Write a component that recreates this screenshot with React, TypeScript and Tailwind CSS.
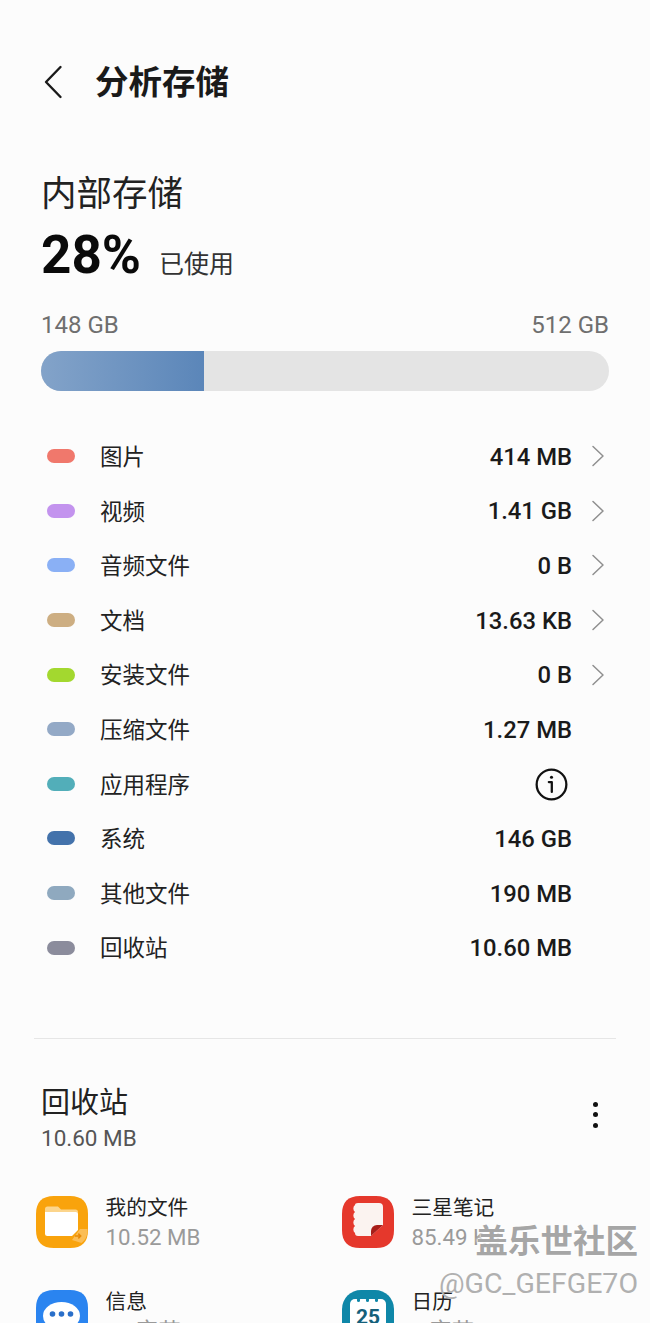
const FONT = "font-['Roboto','Noto_Sans_CJK_SC',sans-serif]";

const SQUIRCLE = 'M18 0H34C46 0 52 6 52 18V34C52 46 46 52 34 52H18C6 52 0 46 0 34V18C0 6 6 0 18 0z';

const rows = [
  { label: '图片', value: '414 MB', dot: 'bg-[#f0786c]', arrow: true },
  { label: '视频', value: '1.41 GB', dot: 'bg-[#c393ee]', arrow: true },
  { label: '音频文件', value: '0 B', dot: 'bg-[#8ab0f5]', arrow: true },
  { label: '文档', value: '13.63 KB', dot: 'bg-[#cdae82]', arrow: true },
  { label: '安装文件', value: '0 B', dot: 'bg-[#a3d82f]', arrow: true },
  { label: '压缩文件', value: '1.27 MB', dot: 'bg-[#93a9c6]' },
  { label: '应用程序', info: true, dot: 'bg-[#52aeb9]' },
  { label: '系统', value: '146 GB', dot: 'bg-[#4372ab]' },
  { label: '其他文件', value: '190 MB', dot: 'bg-[#8fa9bf]' },
  { label: '回收站', value: '10.60 MB', dot: 'bg-[#8b8c9c]' },
];

function BackIcon() {
  return (
    <svg width="20" height="34" viewBox="0 0 20 34" fill="none" stroke="#1a1a1a" strokeWidth="2.4">
      <path d="M17.500 2L3 17l14.500 15" strokeLinecap="round" strokeLinejoin="round" />
    </svg>
  );
}

function RowChevron() {
  return (
    <svg width="14" height="22" viewBox="0 0 14 22" fill="none" stroke="#8f8f8f" strokeWidth="1.5">
      <path d="M2 1.500L12 11 2 20.500" strokeLinecap="round" strokeLinejoin="round" />
    </svg>
  );
}

function InfoIcon() {
  return (
    <svg width="33" height="33" viewBox="0 0 32 32" fill="none" stroke="#111" strokeWidth="2.2">
      <circle cx="16" cy="16" r="14.400" />
      <path d="M13.400 13.600h2.900v9.600" strokeLinecap="round" strokeLinejoin="round" />
      <circle cx="16" cy="9" r="1.500" fill="#111" stroke="none" />
    </svg>
  );
}

function FilesIcon() {
  return (
    <svg width="52" height="52" viewBox="0 0 52 52">
      <path d={SQUIRCLE} fill="#f9a30c" />
      <path d="M9 13a2.500 2.500 0 0 1 2.500-2.500H22l3 3h14.500A2.500 2.500 0 0 1 42 16v3H9z" fill="#fcd58c" />
      <path d="M9 16h30.500a2.500 2.500 0 0 1 2.500 2.500V34l-6 6H11.500A2.500 2.500 0 0 1 9 37.500z" fill="#fff" />
      <path d="M36 44l8-11h7.500c0 7-2 11-6 14z" fill="#fbbd55" />
      <path d="M39 40h5.500m-2.200-2.400l2.400 2.400-2.400 2.400" stroke="#e88a06" strokeWidth="1.500" fill="none" />
    </svg>
  );
}

function NotesIcon() {
  return (
    <svg width="52" height="52" viewBox="0 0 52 52">
      <path d={SQUIRCLE} fill="#e5382c" />
      <path
        d="M16 7h21a4 4 0 0 1 4 4v18L29 40H16a3 3 0 0 1-3-3a4.500 4.500 0 0 1 0-7a4.500 4.500 0 0 1 0-7a4.500 4.500 0 0 1 0-7a4.500 4.500 0 0 1 0-7a3 2 0 0 1 3-2z"
        fill="#fbf3f0"
      />
      <path d="M29 40v-5a6 6 0 0 1 6-6h6z" fill="#a81d18" />
    </svg>
  );
}

function MessagesIcon() {
  return (
    <svg width="52" height="52" viewBox="0 0 52 52">
      <path d={SQUIRCLE} fill="#2a84f0" />
      <ellipse cx="25.500" cy="26" rx="18.500" ry="14" fill="#fff" />
      <path d="M13 33l-2 10 9-5z" fill="#fff" />
      <circle cx="16.500" cy="24" r="2.800" fill="#2a6fc9" />
      <circle cx="25.500" cy="24" r="2.800" fill="#2a6fc9" />
      <circle cx="34.500" cy="24" r="2.800" fill="#2a6fc9" />
    </svg>
  );
}

function CalendarIcon() {
  return (
    <div className="relative h-[52px] w-[52px] overflow-hidden rounded-[19px] bg-[#0f87a8]">
      <div className="mx-auto mt-[9px] flex h-[38px] w-[36px] justify-center rounded-[5px] bg-white pt-[7px] text-[21px] leading-[22px] font-bold text-[#15607a]">
        25
      </div>
      <span className="absolute top-[8px] left-[15px] h-[4px] w-[3px] rounded-full bg-[#0f87a8]" />
      <span className="absolute top-[8px] left-[24px] h-[4px] w-[3px] rounded-full bg-[#0f87a8]" />
      <span className="absolute top-[8px] left-[33px] h-[4px] w-[3px] rounded-full bg-[#0f87a8]" />
    </div>
  );
}

function AppItem({ icon, name, size }: { icon: React.ReactNode; name: string; size: string }) {
  return (
    <div className="flex h-[94px] items-start">
      {icon}
      <div className="-mt-[3px] ml-[17.500px]">
        <div className="text-[20.700px] leading-[30px] text-[#222]">{name}</div>
        <div className="text-[22.300px] leading-[29px] text-[#9a9a9a]">{size}</div>
      </div>
    </div>
  );
}

export default function App() {
  return (
    <div className={`${FONT} relative h-[1323px] w-[650px] overflow-hidden bg-[#fcfcfc] text-[#0a0a0a]`}>
      <div className="flex h-[164px] items-center pl-[43px]">
        <BackIcon />
        <span className="mt-[1px] ml-[32px] text-[33.500px] leading-none font-bold text-[#1a1a1a]">分析存储</span>
      </div>

      <section className="px-[41px]">
        <h2 className="mt-[10px] text-[35.500px] leading-[40px] text-[#222]">内部存储</h2>
        <div className="mt-[11px] flex items-end">
          <span className="text-[53px] leading-[60px] font-bold">28%</span>
          <span className="mb-[5px] ml-[18px] text-[25px] leading-[30px] text-[#333]">已使用</span>
        </div>
        <div className="mt-[26px] flex justify-between text-[24px] leading-[28px] text-[#6f6f6f]">
          <span>148 GB</span>
          <span>512 GB</span>
        </div>
        <div className="mt-[12px] h-[40px] overflow-hidden rounded-full bg-[#e4e4e4]">
          <div className="h-full w-[163px] bg-gradient-to-r from-[#83a3c9] to-[#5b86b9]" />
        </div>
      </section>

      <ul className="mt-[39px] pr-[46px] pl-[47px]">
        {rows.map((row) => (
          <li key={row.label} className="flex h-[54.600px] items-center">
            <span className={`-mt-[2px] h-[14px] w-[28px] rounded-full ${row.dot}`} />
            <span className="ml-[25px] flex-1 text-[22.500px] leading-none text-[#222]">{row.label}</span>
            {row.info ? (
              <span className="mr-[36px] flex">
                <InfoIcon />
              </span>
            ) : (
              <span
                className={`mt-[1px] text-[23.800px] leading-none font-medium text-[#1a1a1a] ${row.arrow ? '' : 'mr-[32px]'}`}
              >
                {row.value}
              </span>
            )}
            {row.arrow && (
              <span className="-mt-[2px] -mr-[1px] ml-[19px] flex">
                <RowChevron />
              </span>
            )}
          </li>
        ))}
      </ul>

      <div className="mx-[34px] mt-[62px] border-t border-[#e6e6e6]" />

      <section className="relative mt-[44px] px-[41px]">
        <h3 className="text-[29px] leading-[40px] text-[#222]">回收站</h3>
        <div className="text-[22.500px] leading-[30px] text-[#555]">10.60 MB</div>
        <div className="absolute top-[19px] right-[52px] flex flex-col gap-[5.500px]">
          <span className="h-[5px] w-[5px] rounded-full bg-[#111]" />
          <span className="h-[5px] w-[5px] rounded-full bg-[#111]" />
          <span className="h-[5px] w-[5px] rounded-full bg-[#111]" />
        </div>
      </section>

      <div className="mt-[43px] grid grid-cols-[306px_1fr] pl-[36px]">
        <AppItem icon={<FilesIcon />} name="我的文件" size="10.52 MB" />
        <AppItem icon={<NotesIcon />} name="三星笔记" size="85.49 KB" />
        <AppItem icon={<MessagesIcon />} name="信息" size="48 字节" />
        <AppItem icon={<CalendarIcon />} name="日历" size="0 字节" />
      </div>

      {/* watermark */}
      <div className="absolute top-[1223px] right-[12px] flex flex-col items-end">
        <span className="text-[32.500px] leading-[38px] font-bold text-[#a6a6a6] [text-shadow:0_0_3px_#fff,0_0_3px_#fff,1px_1px_1px_#fff]">
          盖乐世社区
        </span>
        <span className="mt-[7px] text-[28.500px] leading-[32px] text-[#b0b0b0]">@GC_GEFGE7O</span>
      </div>
    </div>
  );
}
